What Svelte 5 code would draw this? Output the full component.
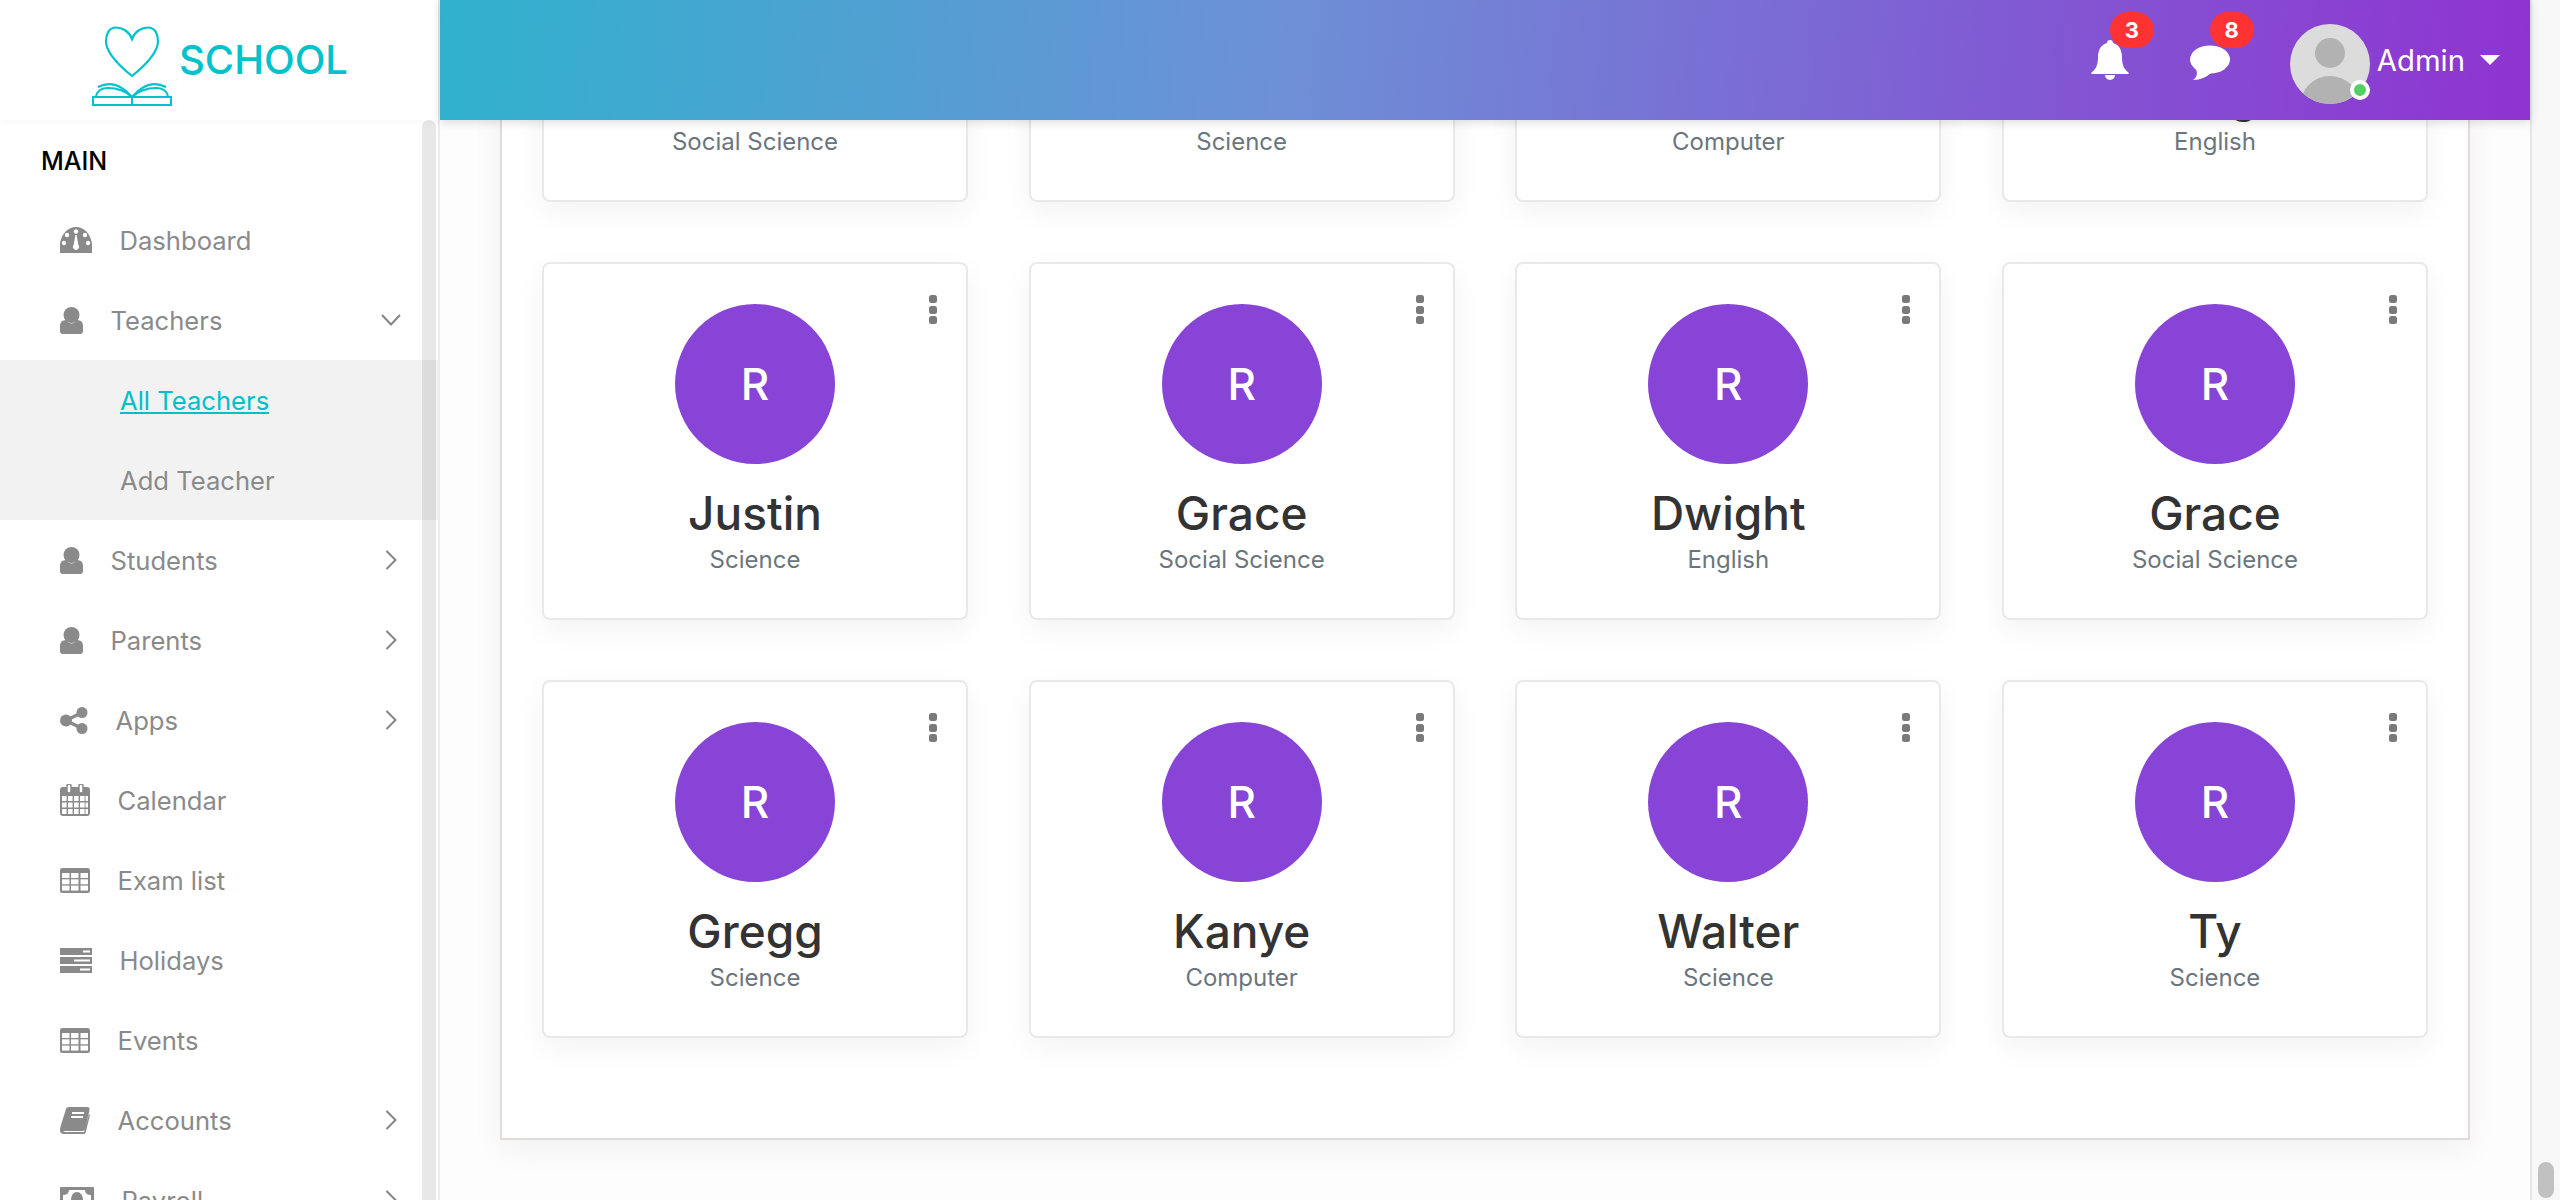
<script>
  const menu = [
    { label: 'Dashboard', icon: 'gauge' },
    { label: 'Teachers', icon: 'user', arrow: 'down', open: true },
    { label: 'Students', icon: 'user', arrow: 'right' },
    { label: 'Parents', icon: 'user', arrow: 'right' },
    { label: 'Apps', icon: 'share', arrow: 'right' },
    { label: 'Calendar', icon: 'calendar' },
    { label: 'Exam list', icon: 'table' },
    { label: 'Holidays', icon: 'server' },
    { label: 'Events', icon: 'table' },
    { label: 'Accounts', icon: 'book', arrow: 'right' },
    { label: 'Payroll', icon: 'money', arrow: 'right' }
  ];

  const teachers = [
    { name: 'Robert', subject: 'Social Science' },
    { name: 'Diane', subject: 'Science' },
    { name: 'Carol', subject: 'Computer' },
    { name: 'Margo', subject: 'English' },
    { name: 'Justin', subject: 'Science' },
    { name: 'Grace', subject: 'Social Science' },
    { name: 'Dwight', subject: 'English' },
    { name: 'Grace', subject: 'Social Science' },
    { name: 'Gregg', subject: 'Science' },
    { name: 'Kanye', subject: 'Computer' },
    { name: 'Walter', subject: 'Science' },
    { name: 'Ty', subject: 'Science' }
  ];
</script>

{#snippet icon(name)}
  {#if name === 'gauge'}
    <svg class="ico" width="32" height="26" viewBox="0 0 32 26">
      <path d="M0 26 Q-1 24 0 17 C1 7 8 0 16 0 C24 0 31 7 32 17 Q33 24 32 26Z" fill="#8a8a8a" />
      <g fill="#fff">
        <circle cx="16" cy="4.5" r="2.2" /><circle cx="7" cy="8" r="2.2" /><circle cx="25" cy="8" r="2.2" />
        <circle cx="4" cy="16" r="2.2" /><circle cx="28" cy="16" r="2.2" />
        <path d="M16.6 8 L18.4 18 A3 3 0 1 1 13.6 18 L15.4 8Z" />
      </g>
    </svg>
  {:else if name === 'user'}
    <svg class="ico" width="23" height="27" viewBox="0 0 23 27">
      <circle cx="11.5" cy="8" r="8" fill="#8a8a8a" />
      <path d="M0 19 Q0 13 6 13 Q9 16.5 11.5 16.5 Q14 16.5 17 13 Q23 13 23 19 V24 Q23 27 20 27 H3 Q0 27 0 24Z" fill="#8a8a8a" />
    </svg>
  {:else if name === 'share'}
    <svg class="ico" width="28" height="27" viewBox="0 0 28 27">
      <g fill="#8a8a8a"><circle cx="6" cy="13.5" r="6" /><circle cx="22" cy="5.5" r="5.5" /><circle cx="22" cy="21.5" r="5.5" /></g>
      <path d="M6 13.5 L22 5.5 M6 13.5 L22 21.5" stroke="#8a8a8a" stroke-width="3.5" />
    </svg>
  {:else if name === 'calendar'}
    <svg class="ico" width="30" height="32" viewBox="0 0 30 32">
      <rect x="0" y="3" width="30" height="29" rx="3" fill="#8a8a8a" />
      <g fill="#fff">
        <rect x="7" y="0" width="4" height="9" rx="2" stroke="#8a8a8a" stroke-width="1.5" />
        <rect x="19" y="0" width="4" height="9" rx="2" stroke="#8a8a8a" stroke-width="1.5" />
        {#each [2, 8, 14, 20, 25.5] as x}
          {#each [12, 18.5, 25] as y}
            <rect {x} {y} width={x === 25.5 ? 2.5 : 4.6} height="5" />
          {/each}
        {/each}
      </g>
    </svg>
  {:else if name === 'table'}
    <svg class="ico" width="30" height="25" viewBox="0 0 30 25">
      <rect width="30" height="25" rx="2.5" fill="#8a8a8a" />
      <g fill="#fff">
        {#each [2, 11, 20.5] as x}
          {#each [5, 11.3, 17.6] as y}
            <rect {x} {y} width="7.5" height="5" />
          {/each}
        {/each}
      </g>
    </svg>
  {:else if name === 'server'}
    <svg class="ico" width="32" height="25" viewBox="0 0 32 25">
      <g fill="#8a8a8a"><rect width="32" height="7" /><rect y="9" width="32" height="7" /><rect y="18" width="32" height="7" /></g>
      <g fill="#fff"><rect x="23" y="2.5" width="7" height="2" /><rect x="14" y="11.5" width="16" height="2" /><rect x="20" y="20.5" width="10" height="2" /></g>
    </svg>
  {:else if name === 'book'}
    <svg class="ico" width="30" height="27" viewBox="0 0 30 27">
      <path d="M9 0 H27 Q30 0 29.5 3 L25 22 Q24.5 24 22 24 H6 Q3 24 3.5 25 H24 L29 7 L30 8 L25.5 26 Q25 27 23 27 H4 Q0 27 0 23 Q0 21 1 18 L6 2 Q6.5 0 9 0Z" fill="#8a8a8a" />
      <g fill="#fff"><rect x="12" y="5" width="12" height="2" /><rect x="11" y="9" width="12" height="2" /></g>
    </svg>
  {:else}
    <svg class="ico" width="34" height="26" viewBox="0 0 34 26">
      <rect width="34" height="26" rx="1" fill="#8a8a8a" />
      <rect x="3" y="3" width="28" height="20" fill="#fff" />
      <path d="M3 3 H9 Q9 8 3 8Z M31 3 H25 Q25 8 31 8Z" fill="#8a8a8a" />
      <ellipse cx="17" cy="13" rx="6" ry="8" fill="#8a8a8a" />
    </svg>
  {/if}
{/snippet}

<div class="page">
  <aside class="sidebar">
    <div class="brand">
      <svg width="80" height="80" viewBox="0 0 80 80" fill="none" stroke="#00c2cd">
        <path stroke-width="2.2" d="M40 13 C37 5 30 1.5 24 1.5 C17 1.5 14 8 14 15 C14 28 30 42 40 50 C50 42 66 28 66 15 C66 8 63 1.5 56 1.5 C50 1.5 43 5 40 13Z" />
        <path stroke-width="2" d="M1 71 H79 V79 H1Z M40 71 V79" />
        <path stroke-width="2" d="M4 70 Q6 62 16 62 Q30 62 40 71 Q50 62 64 62 Q74 62 76 70" />
        <path stroke-width="2" d="M6 61 Q24 52 40 71 Q56 52 74 61" />
      </svg>
      <span class="brand-name">SCHOOL</span>
    </div>
    <nav class="nav">
      <div class="track"></div>
      <div class="nav-title">MAIN</div>
      {#each menu as item}
        <div class="nav-item">
          {@render icon(item.icon)}
          <span>{item.label}</span>
          {#if item.arrow === 'right'}
            <svg class="arrow" width="12" height="20" viewBox="0 0 12 20" fill="none" stroke="#858585" stroke-width="2"><path d="M1.5 1 L10.5 10 L1.5 19" /></svg>
          {:else if item.arrow === 'down'}
            <svg class="arrow down" width="20" height="12" viewBox="0 0 20 12" fill="none" stroke="#858585" stroke-width="2"><path d="M1 1 L10 10.5 L19 1" /></svg>
          {/if}
        </div>
        {#if item.open}
          <div class="sub">
            <a class="sub-item active" href="#teachers">All Teachers</a>
            <a class="sub-item" href="#add">Add Teacher</a>
          </div>
        {/if}
      {/each}
    </nav>
  </aside>

  <div class="main">
    <header class="topbar">
      <div class="notify">
        <svg width="38" height="40" viewBox="0 0 38 40" fill="#fff">
          <path d="M19 0 C17 0 16 1 16 3 C9 5 7 11 7 18 C7 26 4 30 0 33 Q0 34 2 34 H36 Q38 34 38 33 C34 30 31 26 31 18 C31 11 29 5 22 3 C22 1 21 0 19 0Z" />
          <path d="M14 35 A5 5 0 0 0 24 35Z" />
        </svg>
        <span class="badge">3</span>
      </div>
      <div class="notify chat">
        <svg width="40" height="36" viewBox="0 0 40 36" fill="#fff">
          <ellipse cx="20" cy="14.5" rx="20" ry="14" />
          <path d="M6 24 Q9 31 3 35 Q14 35 22 27Z" />
        </svg>
        <span class="badge">8</span>
      </div>
      <div class="user">
        <div class="avatar">
          <svg width="80" height="80" viewBox="0 0 80 80">
            <clipPath id="round"><circle cx="40" cy="40" r="40" /></clipPath>
            <circle cx="40" cy="40" r="40" fill="#dcdcdc" />
            <g clip-path="url(#round)" fill="#b2b2b2">
              <circle cx="40" cy="29" r="15" />
              <ellipse cx="40" cy="82" rx="30" ry="30" />
            </g>
          </svg>
          <span class="online"></span>
        </div>
        <span class="user-name">Admin</span>
        <span class="caret"></span>
      </div>
    </header>

    <div class="content">
      <section class="panel">
        {#each teachers as t}
          <div class="card">
            <div class="kebab"><i></i><i></i><i></i></div>
            <div class="circle">R</div>
            <div class="name">{t.name}</div>
            <div class="subject">{t.subject}</div>
          </div>
        {/each}
      </section>
    </div>
  </div>

  <div class="page-scroll"><div class="thumb"></div></div>
</div>

<style>
  :global(body) {
    margin: 0;
    font-family: Inter, "Noto Sans", sans-serif;
    background: #fff;
  }
  .page {
    display: flex;
    height: 1200px;
    overflow: hidden;
  }

  .sidebar {
    width: 438px;
    flex: none;
    border-right: 2px solid #ececec;
    background: #fff;
    display: flex;
    flex-direction: column;
  }
  .brand {
    height: 120px;
    flex: none;
    padding: 26px 0 0 92px;
    box-sizing: border-box;
    display: flex;
    align-items: flex-start;
    gap: 7px;
    box-shadow: 0 2px 8px rgba(0, 0, 0, 0.04);
  }
  .brand-name {
    color: #00c2cd;
    font-size: 40px;
    font-weight: 500;
    line-height: 48px;
    margin-top: 10px;
  }
  .nav {
    position: relative;
    flex: 1;
    overflow: hidden;
  }
  .track {
    position: absolute;
    left: 422px;
    top: 0;
    bottom: -10px;
    width: 14px;
    border-radius: 7px 7px 0 0;
    background: rgba(0, 0, 0, 0.09);
  }
  .nav-title {
    height: 80px;
    line-height: 82px;
    padding-left: 41px;
    font-size: 25px;
    font-weight: 500;
    color: #000;
  }
  .nav-item {
    height: 80px;
    display: flex;
    align-items: center;
    padding: 0 41px 0 60px;
    font-size: 25.6px;
    color: #8a8a8a;
  }
  .ico {
    flex: none;
    margin-right: 27.5px;
  }
  .arrow {
    margin-left: auto;
  }
  .arrow.down {
    margin-right: -4px;
  }
  .sub {
    background: #f2f2f2;
  }
  .sub-item {
    display: block;
    height: 80px;
    line-height: 81px;
    padding-left: 120px;
    font-size: 25.6px;
    color: #8a8a8a;
    text-decoration: none;
  }
  .sub-item.active {
    color: #00bfc9;
    text-decoration: underline;
  }

  .main {
    flex: 1;
    min-width: 0;
    display: flex;
    flex-direction: column;
    background: #fdfdfd;
  }
  .topbar {
    position: relative;
    z-index: 2;
    height: 120px;
    flex: none;
    display: flex;
    align-items: flex-start;
    justify-content: flex-end;
    padding-right: 30px;
    background: linear-gradient(95deg, #2fb1cd 0%, #6d90d6 40%, #8f33d1 100%);
    box-shadow: 0 2px 10px rgba(0, 0, 0, 0.15);
  }
  .notify {
    position: relative;
    margin: 40px 61px 0 0;
    height: 40px;
  }
  .notify.chat {
    margin: 45px 60px 0 0;
  }
  .badge {
    position: absolute;
    left: 19px;
    top: -28px;
    width: 44px;
    height: 36px;
    border-radius: 18px;
    background: #ff3333;
    color: #fff;
    font-size: 22px;
    font-weight: 700;
    line-height: 36px;
    text-align: center;
  }
  .chat .badge {
    left: 20px;
    top: -33px;
  }
  .user {
    display: flex;
    align-items: center;
    height: 80px;
    margin-top: 24px;
  }
  .avatar {
    position: relative;
    width: 80px;
    height: 80px;
    margin-right: 7px;
  }
  .online {
    position: absolute;
    right: 0;
    bottom: 4px;
    width: 12px;
    height: 12px;
    border: 4px solid #fff;
    border-radius: 50%;
    background: #55ce63;
  }
  .user-name {
    color: #fff;
    font-size: 29.3px;
    margin-top: -8px;
  }
  .caret {
    margin: -8px 0 0 15px;
    width: 0;
    height: 0;
    border-left: 10px solid transparent;
    border-right: 10px solid transparent;
    border-top: 10px solid #fff;
  }

  .content {
    margin-top: -278px;
    padding: 0 60px;
  }
  .panel {
    display: grid;
    grid-template-columns: repeat(4, 426px);
    gap: 60px 60.67px;
    padding: 0 40px 100px;
    border: 2px solid #e3dada;
    background: #fff;
    box-shadow: 0 10px 30px rgba(0, 0, 0, 0.05);
  }
  .card {
    position: relative;
    box-sizing: border-box;
    height: 358px;
    padding-top: 40px;
    border: 2px solid #e9e9e9;
    border-radius: 8px;
    background: #fff;
    box-shadow: 0 10px 30px rgba(0, 0, 0, 0.05);
    text-align: center;
  }
  .kebab {
    position: absolute;
    top: 31px;
    right: 29px;
    display: flex;
    flex-direction: column;
    gap: 2.5px;
  }
  .kebab i {
    width: 8px;
    height: 8px;
    border-radius: 2.5px;
    background: #7a7a7a;
  }
  .circle {
    width: 160px;
    height: 160px;
    margin: 0 auto;
    border-radius: 50%;
    background: #8844d6;
    color: #fff;
    font-size: 44px;
    font-weight: 500;
    line-height: 160px;
  }
  .name {
    margin-top: 21px;
    color: #333;
    font-size: 46px;
    font-weight: 500;
    line-height: 56px;
  }
  .subject {
    margin-top: 3px;
    color: #6c757d;
    font-size: 24px;
    line-height: 32px;
  }

  .page-scroll {
    width: 28px;
    flex: none;
    border-left: 2px solid #e6e6e6;
    background: #f8f8f8;
    display: flex;
    flex-direction: column;
    justify-content: flex-end;
    align-items: center;
    padding-bottom: 2px;
    box-sizing: content-box;
    height: 1198px;
  }
  .thumb {
    width: 16px;
    height: 36px;
    border-radius: 8px;
    background: #c1c1c1;
  }
</style>
